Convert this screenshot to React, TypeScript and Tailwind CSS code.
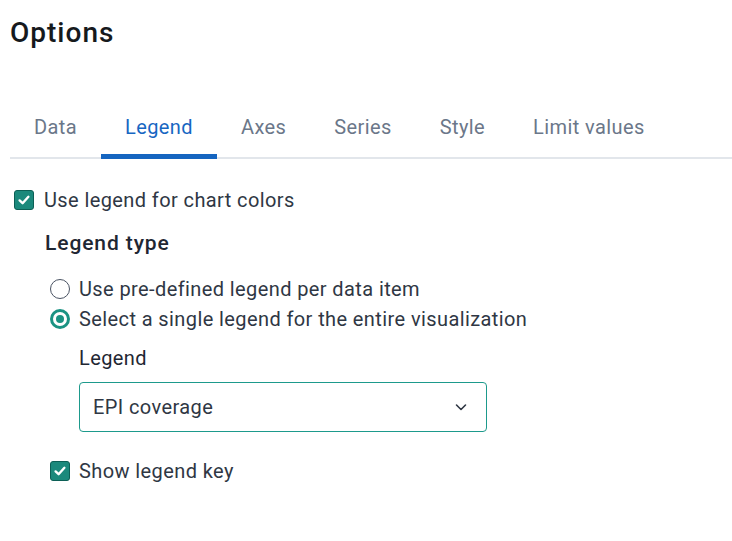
import { useState } from "react";

const tabs = ["Data", "Legend", "Axes", "Series", "Style", "Limit values"];

function CheckBox({ checked }: { checked: boolean }) {
  return (
    <span
      className={
        "flex h-[20px] w-[20px] shrink-0 items-center justify-center rounded-[3px] border-[1.5px] " +
        (checked ? "border-[#0c5f55] bg-[#1b897c]" : "border-[#4a5568] bg-white")
      }
    >
      {checked && (
        <svg width="14" height="14" viewBox="0 0 14 14" fill="none">
          <path
            d="M2.6 7.4 L5.6 10.2 L11.4 3.8"
            stroke="white"
            strokeWidth="2.4"
            strokeLinecap="round"
            strokeLinejoin="round"
          />
        </svg>
      )}
    </span>
  );
}

function Radio({ checked }: { checked: boolean }) {
  return (
    <span
      className={
        "flex h-[20px] w-[20px] shrink-0 items-center justify-center rounded-full " +
        (checked ? "border-[3px] border-[#1a9383]" : "border-[1.5px] border-[#4a5363]")
      }
    >
      {checked && <span className="h-[8px] w-[8px] rounded-full bg-[#1a9383]" />}
    </span>
  );
}

export default function App() {
  const [tab, setTab] = useState("Legend");
  const [radio, setRadio] = useState(1);

  return (
    <div className="min-h-[541px] bg-white pl-[10px] pt-[16px] font-['Roboto',sans-serif] text-[#2f3744]">
      <h1 className="text-[28px] font-medium leading-[34px] tracking-[1px] text-[#16191d]">Options</h1>

      <div className="mt-[50px] flex border-b-2 border-[#e2e6eb]">
        {tabs.map((t) => (
          <button
            key={t}
            onClick={() => setTab(t)}
            className={
              "-mb-[2px] border-b-[5px] px-6 pb-[15px] pt-[15px] text-[20px] leading-[24px] tracking-[0.4px] " +
              (t === tab ? "border-[#1565c0] text-[#1766c2]" : "border-transparent text-[#6b7789]")
            }
          >
            {t}
          </button>
        ))}
      </div>

      <div className="text-[20px] tracking-[0.4px]">
        <label className="mt-[29px] flex items-center gap-[10px] pl-[4px] leading-[24px]">
          <CheckBox checked />
          Use legend for chart colors
        </label>

        <div className="pl-[35px]">
          <h2 className="mt-[17px] text-[21px] font-medium leading-[28px] tracking-[0.9px] text-[#1f2733]">
            Legend type
          </h2>

          <div className="mt-[17px] pl-[5px]">
            {["Use pre-defined legend per data item", "Select a single legend for the entire visualization"].map(
              (label, i) => (
                <div key={label} onClick={() => setRadio(i)} className="flex h-[30px] items-center gap-[9px]">
                  <Radio checked={radio === i} />
                  {label}
                </div>
              )
            )}

            <div className="pl-[29px]">
              <div className="mt-[12px] leading-[24px] text-[#1f2733]">Legend</div>
              <div className="mt-[12px] flex h-[50px] w-[408px] items-center justify-between rounded-[4px] border border-[#1d9a8c] pl-[13px] pr-[18px]">
                <span>EPI coverage</span>
                <svg width="14" height="14" viewBox="0 0 14 14" fill="none">
                  <path
                    d="M2.5 5 L7 9.5 L11.5 5"
                    stroke="#2f3744"
                    strokeWidth="1.6"
                    strokeLinecap="round"
                    strokeLinejoin="round"
                  />
                </svg>
              </div>
            </div>

            <label className="mt-[27px] flex items-center gap-[9px] leading-[24px]">
              <CheckBox checked />
              Show legend key
            </label>
          </div>
        </div>
      </div>
    </div>
  );
}
